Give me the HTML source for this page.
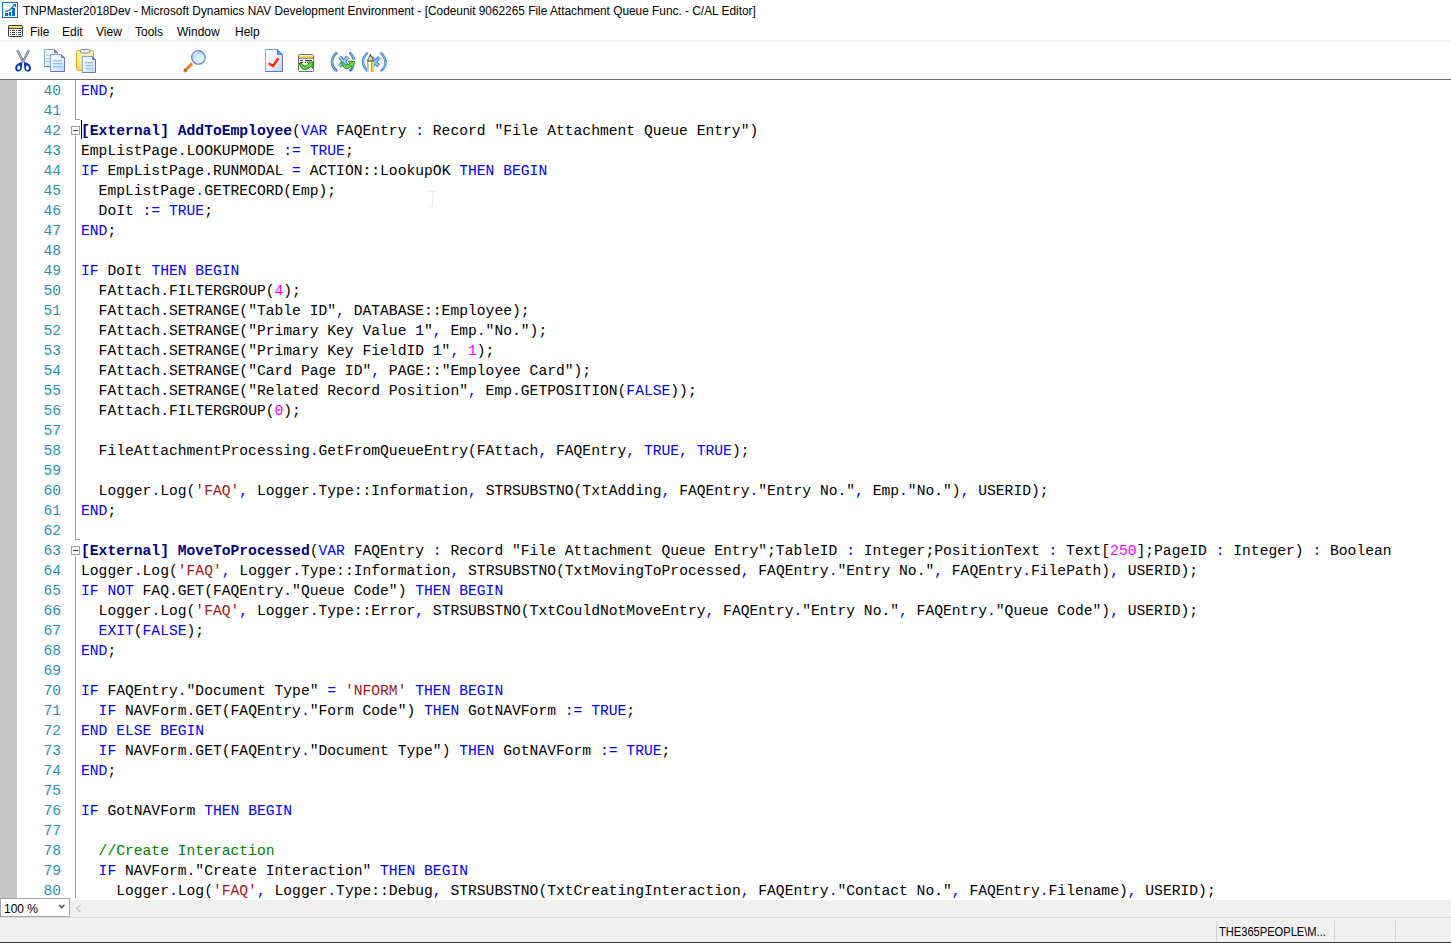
<!DOCTYPE html>
<html><head><meta charset="utf-8">
<style>
*{margin:0;padding:0;box-sizing:border-box}
html,body{width:1451px;height:943px;overflow:hidden;background:#fff}
body{position:relative;font-family:"Liberation Sans",sans-serif;color:#000}
.abs{position:absolute}
#title{position:absolute;left:23px;top:3px;font-size:12px;transform:scaleX(0.988);transform-origin:0 0;line-height:16px;white-space:nowrap;color:#000}
#menu{position:absolute;top:24px;left:0;height:18px;font-size:12px;line-height:16px}
#menu span{position:absolute;top:0;white-space:nowrap}
#sep1{position:absolute;left:0;top:40px;width:1451px;height:2px;background:#f0f0f0}
#sep2{position:absolute;left:0;top:79px;width:1451px;height:1px;background:#6b6b6b}
#editor{position:absolute;left:0;top:80px;width:1451px;height:818px;overflow:hidden;background:#fff}
#gutter{position:absolute;left:0;top:0;width:17px;height:818px;background:#c6c6c6}
.ln{position:absolute;left:0;width:61px;text-align:right;height:20px;line-height:22px;font-family:"Liberation Mono",monospace;font-size:14.66px;color:#2b91af;white-space:pre}
.cl{position:absolute;left:81px;height:20px;line-height:22px;font-family:"Liberation Mono",monospace;font-size:14.66px;color:#000;white-space:pre}
.cl i{font-style:normal}
.k{color:#0000ff}
.s{color:#a31515}
.n{color:#ff00ff}
.c{color:#008000}
.b{color:#000080;font-weight:bold}
.vl{position:absolute;width:1px;background:#a0a0a0}
.fb{position:absolute;width:9px;height:9px;border:1px solid #a0a0a0;background:#fff}
.fb:after{content:"";position:absolute;left:1px;top:3px;width:5px;height:1px;background:#404040}
#bottom{position:absolute;left:0;top:898px;width:1451px;height:45px;background:#f0f0f0}
#zoom{position:absolute;left:0;top:898px;width:70px;height:19px;border:1px solid #a4a6ac;background:#fff;font-size:12px;line-height:16px}
#status{position:absolute;left:0;top:917px;width:1451px;height:1px;background:#dadada}
#bline{position:absolute;left:0;top:941px;width:1451px;height:2px;background:#333}
.sdiv{position:absolute;top:921px;width:1px;height:20px;background:#d4d4d4}
#stxt{position:absolute;left:1219px;top:924px;font-size:12px;line-height:16px;white-space:nowrap;transform:scaleX(0.926);transform-origin:0 0}
</style></head><body>
<div id="title">TNPMaster2018Dev - Microsoft Dynamics NAV Development Environment - [Codeunit 9062265 File Attachment Queue Func. - C/AL Editor]</div>
<div id="menu"><span style="left:30px">File</span><span style="left:62px">Edit</span><span style="left:96px">View</span><span style="left:135px">Tools</span><span style="left:177px">Window</span><span style="left:235px">Help</span></div>
<div id="sep1"></div>
<svg class="abs" style="left:0;top:0" width="400" height="80" viewBox="0 0 400 80">
<defs>
<linearGradient id="docg" x1="0" y1="0" x2="1" y2="1"><stop offset="0" stop-color="#ffffff"/><stop offset="0.45" stop-color="#eef4fc"/><stop offset="1" stop-color="#b5d5f8"/></linearGradient>
<linearGradient id="clipg" x1="0" y1="0" x2="0" y2="1"><stop offset="0" stop-color="#fff8c0"/><stop offset="1" stop-color="#ffd65a"/></linearGradient>
<radialGradient id="lensg" cx="0.6" cy="0.65" r="0.6"><stop offset="0" stop-color="#f4ffff"/><stop offset="0.6" stop-color="#c6ecfb"/><stop offset="1" stop-color="#9cc8f2"/></radialGradient>
<linearGradient id="yband" x1="0" y1="0" x2="0" y2="1"><stop offset="0" stop-color="#fffad0"/><stop offset="1" stop-color="#f5b21c"/></linearGradient>
</defs>
<!-- title icon -->
<rect x="2.5" y="2.5" width="15" height="15" fill="#fff" stroke="#0a6fc8" stroke-width="1"/>
<rect x="5" y="13" width="3" height="3" fill="#0a6fc8"/>
<rect x="9" y="12" width="2" height="4" fill="#0a6fc8"/>
<rect x="12" y="8" width="3" height="8" fill="#0a6fc8"/>
<path d="M5.2 11.4 L9.6 10.2 L14.2 5.2" fill="none" stroke="#0a6fc8" stroke-width="1.3"/>
<path d="M12.8 4 L16 4 L16 7.2 Z" fill="#0a6fc8"/>
<!-- menu icon -->
<rect x="8.5" y="25.5" width="14" height="11" rx="1" fill="#fff" stroke="#333" stroke-width="1"/>
<rect x="9" y="26" width="13" height="2" fill="url(#yband)"/>
<rect x="8.5" y="28" width="14" height="1" fill="#444"/>
<g fill="#444"><rect x="10" y="30" width="1" height="1"/><rect x="12" y="30" width="3" height="1"/><rect x="16" y="30" width="1" height="1"/><rect x="18" y="30" width="3" height="1"/>
<rect x="10" y="32" width="1" height="1"/><rect x="12" y="32" width="3" height="1"/><rect x="16" y="32" width="1" height="1"/><rect x="18" y="32" width="3" height="1"/>
<rect x="10" y="34" width="1" height="1"/><rect x="12" y="34" width="3" height="1"/><rect x="16" y="34" width="1" height="1"/><rect x="18" y="34" width="3" height="1"/></g>
<!-- scissors -->
<path d="M17.3 50 L23.3 62" stroke="#556080" stroke-width="2.2" fill="none"/>
<path d="M17.3 50 L23.3 62" stroke="#d8dde8" stroke-width="0.8" fill="none"/>
<path d="M28.9 50 L22.9 62" stroke="#556080" stroke-width="2.2" fill="none"/>
<path d="M28.9 50 L22.9 62" stroke="#d8dde8" stroke-width="0.8" fill="none"/>
<path fill-rule="evenodd" fill="#0a3db8" d="M22.4 62.3 C18.5 62.3 15.2 64.8 15.2 68.2 C15.2 70.4 16.7 71.6 18.3 71.6 C20.6 71.6 22 69.5 22 66.8 Z M18.9 65.6 C20.1 65.6 20.4 66.8 20.3 67.9 C20.2 69 19.5 69.9 18.6 69.9 C17.6 69.9 17.1 69.1 17.3 68 C17.5 66.7 18.1 65.6 18.9 65.6 Z"/>
<path fill-rule="evenodd" fill="#0a3db8" d="M23.8 62.3 C27.7 62.3 31 64.8 31 68.2 C31 70.4 29.5 71.6 27.9 71.6 C25.6 71.6 24.2 69.5 24.2 66.8 Z M27.3 65.6 C26.1 65.6 25.8 66.8 25.9 67.9 C26 69 26.7 69.9 27.6 69.9 C28.6 69.9 29.1 69.1 28.9 68 C28.7 66.7 28.1 65.6 27.3 65.6 Z"/>
<!-- copy -->
<path d="M44.5 49.5 H54.5 L57.5 52.5 V66.5 H44.5 Z" fill="url(#docg)" stroke="#6f74b4" stroke-width="1"/>
<path d="M44.5 66.5 V49.5 H54.5" fill="none" stroke="#7fa6dc" stroke-width="1"/>
<path d="M54.5 49.5 V52.5 H57.5" fill="#5aa8e8" stroke="#6f74b4" stroke-width="1"/>
<g fill="#9ccbf7"><rect x="46" y="55" width="5" height="1"/><rect x="46" y="58" width="5" height="1"/><rect x="46" y="61" width="5" height="1"/></g>
<path d="M50.5 54.5 H61.5 L64.5 57.5 V71.5 H50.5 Z" fill="url(#docg)" stroke="#6f74b4" stroke-width="1"/>
<path d="M50.5 71.5 V54.5 H61.5" fill="none" stroke="#7fa6dc" stroke-width="1"/>
<path d="M61.5 54.5 V57.5 H64.5" fill="#5aa8e8" stroke="#6f74b4" stroke-width="1"/>
<g fill="#8ec2f6"><rect x="53" y="60" width="9" height="1.3"/><rect x="53" y="63" width="9" height="1.3"/><rect x="53" y="66" width="9" height="1.3"/></g>
<!-- paste -->
<rect x="76.5" y="50.5" width="17" height="20" rx="2" fill="url(#clipg)" stroke="#dca21a" stroke-width="1"/>
<rect x="80.5" y="49.5" width="9" height="3.5" rx="1" fill="#e8ecf0" stroke="#8890a0" stroke-width="1"/>
<path d="M82.5 56.5 H92.5 L95.5 59.5 V72.5 H82.5 Z" fill="url(#docg)" stroke="#6f74b4" stroke-width="1"/>
<path d="M82.5 72.5 V56.5 H92.5" fill="none" stroke="#7fa6dc" stroke-width="1"/>
<path d="M92.5 56.5 V59.5 H95.5" fill="#5aa8e8" stroke="#6f74b4" stroke-width="1"/>
<g fill="#8ec2f6"><rect x="85" y="62" width="8" height="1.3"/><rect x="85" y="65" width="8" height="1.3"/><rect x="85" y="68" width="8" height="1.3"/></g>
<!-- magnifier -->
<path d="M185 70.6 L191.2 64.4" stroke="#e48a2a" stroke-width="3.4" stroke-linecap="round" fill="none"/>
<path d="M185 70.6 L185.6 70" stroke="#555" stroke-width="3.4" fill="none"/>
<circle cx="198.4" cy="57.4" r="6.8" fill="url(#lensg)" stroke="#7b82c4" stroke-width="1.2"/>
<path d="M194 55.5 Q195 52.5 198 52" stroke="#ffffff" stroke-width="1.2" fill="none"/>
<!-- doc check -->
<path d="M265.5 49.5 H277.5 L282.5 54.5 V71.5 H265.5 Z" fill="url(#docg)" stroke="#6f74b4" stroke-width="1"/>
<path d="M265.5 71.5 V49.5 H277.5" fill="none" stroke="#7fa6dc" stroke-width="1"/>
<path d="M277.5 49.5 V54.5 H282.5" fill="#4aa0e8" stroke="#6f74b4" stroke-width="1"/>
<path d="M268.6 63.2 L273 66 L278.4 58.2" stroke="#ff2a10" stroke-width="2.5" fill="none"/>
<!-- green form icon -->
<rect x="298.5" y="54.5" width="15" height="17" rx="1" fill="#fff" stroke="#707070" stroke-width="1"/>
<rect x="299" y="55" width="14" height="3" fill="url(#yband)"/>
<rect x="299" y="58" width="14" height="1" fill="#9098a8"/>
<g fill="#333"><rect x="300" y="60" width="3" height="1"/><rect x="305" y="60" width="7" height="1"/><rect x="300" y="62" width="3" height="1"/><rect x="305" y="62" width="1" height="1"/><rect x="300" y="64" width="2" height="1"/></g>
<path d="M299.3 63 Q301 69.5 305 69.5 Q308.5 69.5 310.5 66.5 L312.5 68.5 L313 62 L307 62 L309 64 Q307 66 305 66 Q302.5 66 301 63 Z" fill="#5fd040" stroke="#1b8a10" stroke-width="0.9"/>
<!-- (x) with arrow -->
<path d="M337.2 52.6 C333.6 55.6 332 58.8 332 62 C332 65.3 333.6 68.5 337.2 71.3" stroke="#3070c0" stroke-width="2.6" fill="none"/>
<path d="M337.2 52.6 C333.6 55.6 332 58.8 332 62 C332 65.3 333.6 68.5 337.2 71.3" stroke="#b8daf5" stroke-width="0.9" fill="none"/>
<path d="M349.6 52.6 C351.8 54.5 353.3 56.8 354.2 59.6" stroke="#3070c0" stroke-width="2.6" fill="none"/>
<path d="M349.6 52.6 C351.8 54.5 353.3 56.8 354.2 59.6" stroke="#b8daf5" stroke-width="0.9" fill="none"/>
<path d="M352.4 67.6 C351.7 68.9 350.8 70.2 349.8 71.2" stroke="#2d6ec0" stroke-width="2.4" fill="none"/>
<path d="M339.6 56.8 L347.8 66.2" stroke="#3070c0" stroke-width="3.6" fill="none"/>
<path d="M347.8 56.8 L339.6 66.2" stroke="#3070c0" stroke-width="3.6" fill="none"/>
<path d="M339.6 56.8 L347.8 66.2" stroke="#a9d2f2" stroke-width="2" fill="none"/>
<path d="M347.8 56.8 L339.6 66.2" stroke="#a9d2f2" stroke-width="2" fill="none"/>
<path d="M341.3 62.3 Q343.5 68.8 346.5 68.6 Q349.5 68.4 351 66.2 L353.5 67.5 L354.5 61.3 L348.5 61.3 L350 63.6 Q348.5 65 346.5 64.9 Q344.5 64.6 342.5 62 Z" fill="#66d444" stroke="#168a10" stroke-width="0.9"/>
<!-- (x) with pencil -->
<path d="M367.8 52.6 Q362.4 57.5 363 62.2 Q363.6 67.5 367.8 71" stroke="#3a82c8" stroke-width="2.4" fill="none"/>
<path d="M367.8 52.6 Q362.4 57.5 363 62.2 Q363.6 67.5 367.8 71" stroke="#b8daf5" stroke-width="0.7" fill="none"/>
<path d="M380.5 52.6 Q385.6 57.5 385.6 62.2 Q385.4 67.5 380.5 71" stroke="#3a82c8" stroke-width="2.4" fill="none"/>
<path d="M380.5 52.6 Q385.6 57.5 385.6 62.2 Q385.4 67.5 380.5 71" stroke="#b8daf5" stroke-width="0.7" fill="none"/>
<path d="M371.5 57.2 L378.6 66" stroke="#2f70c0" stroke-width="3.6" fill="none"/>
<path d="M379.3 57.2 L372.3 66" stroke="#2f70c0" stroke-width="3.6" fill="none"/>
<path d="M371.5 57.2 L378.6 66" stroke="#8cc2ee" stroke-width="2" fill="none"/>
<path d="M379.3 57.2 L372.3 66" stroke="#8cc2ee" stroke-width="2" fill="none"/>
<path d="M367.2 61 L370.4 54.2 L373.6 61 Z" fill="#f8c8a0" stroke="#555" stroke-width="0.8"/>
<path d="M369.4 56.4 L370.4 54.2 L371.4 56.4 Z" fill="#444"/>
<rect x="367" y="61" width="6.8" height="11" fill="#fffbd0"/>
<rect x="367.2" y="61" width="1.4" height="11" fill="#b8b8a0"/>
<rect x="371.2" y="61" width="0.9" height="11" fill="#999"/>
<rect x="372.2" y="61" width="1.6" height="11" fill="#f0c020"/>
<rect x="367" y="60.6" width="6.8" height="1" fill="#555"/>
</svg>
<!-- toolbar icons end -->

<div id="sep2"></div>
<div id="editor">
<div id="gutter"></div>
<div class="ln" style="top:0px">40</div>
<div class="cl" style="top:0px"><i class="k">END</i>;</div>
<div class="ln" style="top:20px">41</div>
<div class="ln" style="top:40px">42</div>
<div class="cl" style="top:40px"><i class="b">[External] AddToEmployee</i>(<i class="k">VAR</i> FAQEntry <i class="k">:</i> Record "File Attachment Queue Entry")</div>
<div class="ln" style="top:60px">43</div>
<div class="cl" style="top:60px">EmpListPage<i class="k">.</i>LOOKUPMODE <i class="k">:=</i> <i class="k">TRUE</i>;</div>
<div class="ln" style="top:80px">44</div>
<div class="cl" style="top:80px"><i class="k">IF</i> EmpListPage<i class="k">.</i>RUNMODAL <i class="k">=</i> ACTION::LookupOK <i class="k">THEN</i> <i class="k">BEGIN</i></div>
<div class="ln" style="top:100px">45</div>
<div class="cl" style="top:100px">  EmpListPage<i class="k">.</i>GETRECORD(Emp);</div>
<div class="ln" style="top:120px">46</div>
<div class="cl" style="top:120px">  DoIt <i class="k">:=</i> <i class="k">TRUE</i>;</div>
<div class="ln" style="top:140px">47</div>
<div class="cl" style="top:140px"><i class="k">END</i>;</div>
<div class="ln" style="top:160px">48</div>
<div class="ln" style="top:180px">49</div>
<div class="cl" style="top:180px"><i class="k">IF</i> DoIt <i class="k">THEN</i> <i class="k">BEGIN</i></div>
<div class="ln" style="top:200px">50</div>
<div class="cl" style="top:200px">  FAttach<i class="k">.</i>FILTERGROUP(<i class="n">4</i>);</div>
<div class="ln" style="top:220px">51</div>
<div class="cl" style="top:220px">  FAttach<i class="k">.</i>SETRANGE("Table ID"<i class="k">,</i> DATABASE::Employee);</div>
<div class="ln" style="top:240px">52</div>
<div class="cl" style="top:240px">  FAttach<i class="k">.</i>SETRANGE("Primary Key Value 1"<i class="k">,</i> Emp<i class="k">.</i>"No.");</div>
<div class="ln" style="top:260px">53</div>
<div class="cl" style="top:260px">  FAttach<i class="k">.</i>SETRANGE("Primary Key FieldID 1"<i class="k">,</i> <i class="n">1</i>);</div>
<div class="ln" style="top:280px">54</div>
<div class="cl" style="top:280px">  FAttach<i class="k">.</i>SETRANGE("Card Page ID"<i class="k">,</i> PAGE::"Employee Card");</div>
<div class="ln" style="top:300px">55</div>
<div class="cl" style="top:300px">  FAttach<i class="k">.</i>SETRANGE("Related Record Position"<i class="k">,</i> Emp<i class="k">.</i>GETPOSITION(<i class="k">FALSE</i>));</div>
<div class="ln" style="top:320px">56</div>
<div class="cl" style="top:320px">  FAttach<i class="k">.</i>FILTERGROUP(<i class="n">0</i>);</div>
<div class="ln" style="top:340px">57</div>
<div class="ln" style="top:360px">58</div>
<div class="cl" style="top:360px">  FileAttachmentProcessing<i class="k">.</i>GetFromQueueEntry(FAttach<i class="k">,</i> FAQEntry<i class="k">,</i> <i class="k">TRUE,</i> <i class="k">TRUE</i>);</div>
<div class="ln" style="top:380px">59</div>
<div class="ln" style="top:400px">60</div>
<div class="cl" style="top:400px">  Logger<i class="k">.</i>Log(<i class="s">'FAQ'</i><i class="k">,</i> Logger<i class="k">.</i>Type::Information<i class="k">,</i> STRSUBSTNO(TxtAdding<i class="k">,</i> FAQEntry<i class="k">.</i>"Entry No."<i class="k">,</i> Emp<i class="k">.</i>"No.")<i class="k">,</i> USERID);</div>
<div class="ln" style="top:420px">61</div>
<div class="cl" style="top:420px"><i class="k">END</i>;</div>
<div class="ln" style="top:440px">62</div>
<div class="ln" style="top:460px">63</div>
<div class="cl" style="top:460px"><i class="b">[External] MoveToProcessed</i>(<i class="k">VAR</i> FAQEntry <i class="k">:</i> Record "File Attachment Queue Entry";TableID <i class="k">:</i> Integer;PositionText <i class="k">:</i> Text[<i class="n">250</i>];PageID <i class="k">:</i> Integer) <i class="k">:</i> Boolean</div>
<div class="ln" style="top:480px">64</div>
<div class="cl" style="top:480px">Logger<i class="k">.</i>Log(<i class="s">'FAQ'</i><i class="k">,</i> Logger<i class="k">.</i>Type::Information<i class="k">,</i> STRSUBSTNO(TxtMovingToProcessed<i class="k">,</i> FAQEntry<i class="k">.</i>"Entry No."<i class="k">,</i> FAQEntry<i class="k">.</i>FilePath)<i class="k">,</i> USERID);</div>
<div class="ln" style="top:500px">65</div>
<div class="cl" style="top:500px"><i class="k">IF</i> <i class="k">NOT</i> FAQ<i class="k">.</i>GET(FAQEntry<i class="k">.</i>"Queue Code") <i class="k">THEN</i> <i class="k">BEGIN</i></div>
<div class="ln" style="top:520px">66</div>
<div class="cl" style="top:520px">  Logger<i class="k">.</i>Log(<i class="s">'FAQ'</i><i class="k">,</i> Logger<i class="k">.</i>Type::Error<i class="k">,</i> STRSUBSTNO(TxtCouldNotMoveEntry<i class="k">,</i> FAQEntry<i class="k">.</i>"Entry No."<i class="k">,</i> FAQEntry<i class="k">.</i>"Queue Code")<i class="k">,</i> USERID);</div>
<div class="ln" style="top:540px">67</div>
<div class="cl" style="top:540px">  <i class="k">EXIT</i>(<i class="k">FALSE</i>);</div>
<div class="ln" style="top:560px">68</div>
<div class="cl" style="top:560px"><i class="k">END</i>;</div>
<div class="ln" style="top:580px">69</div>
<div class="ln" style="top:600px">70</div>
<div class="cl" style="top:600px"><i class="k">IF</i> FAQEntry<i class="k">.</i>"Document Type" <i class="k">=</i> <i class="s">'NFORM'</i> <i class="k">THEN</i> <i class="k">BEGIN</i></div>
<div class="ln" style="top:620px">71</div>
<div class="cl" style="top:620px">  <i class="k">IF</i> NAVForm<i class="k">.</i>GET(FAQEntry<i class="k">.</i>"Form Code") <i class="k">THEN</i> GotNAVForm <i class="k">:=</i> <i class="k">TRUE</i>;</div>
<div class="ln" style="top:640px">72</div>
<div class="cl" style="top:640px"><i class="k">END</i> <i class="k">ELSE</i> <i class="k">BEGIN</i></div>
<div class="ln" style="top:660px">73</div>
<div class="cl" style="top:660px">  <i class="k">IF</i> NAVForm<i class="k">.</i>GET(FAQEntry<i class="k">.</i>"Document Type") <i class="k">THEN</i> GotNAVForm <i class="k">:=</i> <i class="k">TRUE</i>;</div>
<div class="ln" style="top:680px">74</div>
<div class="cl" style="top:680px"><i class="k">END</i>;</div>
<div class="ln" style="top:700px">75</div>
<div class="ln" style="top:720px">76</div>
<div class="cl" style="top:720px"><i class="k">IF</i> GotNAVForm <i class="k">THEN</i> <i class="k">BEGIN</i></div>
<div class="ln" style="top:740px">77</div>
<div class="ln" style="top:760px">78</div>
<div class="cl" style="top:760px">  <i class="c">//Create Interaction</i></div>
<div class="ln" style="top:780px">79</div>
<div class="cl" style="top:780px">  <i class="k">IF</i> NAVForm<i class="k">.</i>"Create Interaction" <i class="k">THEN</i> <i class="k">BEGIN</i></div>
<div class="ln" style="top:800px">80</div>
<div class="cl" style="top:800px">    Logger<i class="k">.</i>Log(<i class="s">'FAQ'</i><i class="k">,</i> Logger<i class="k">.</i>Type::Debug<i class="k">,</i> STRSUBSTNO(TxtCreatingInteraction<i class="k">,</i> FAQEntry<i class="k">.</i>"Contact No."<i class="k">,</i> FAQEntry<i class="k">.</i>Filename)<i class="k">,</i> USERID);</div>
<div class="vl" style="left:75px;top:0;height:40px"></div>
<div class="vl" style="left:75px;top:39px;width:5px;height:1px"></div>
<div class="fb" style="left:71px;top:46px"></div>
<div class="vl" style="left:75px;top:56px;height:404px"></div>
<div class="vl" style="left:75px;top:459px;width:5px;height:1px"></div>
<div class="fb" style="left:71px;top:466px"></div>
<div class="vl" style="left:75px;top:476px;height:342px"></div>
<div class="abs" style="left:81px;top:40px;width:1px;height:19px;background:#000"></div>
<div class="abs" style="left:432px;top:111px;width:1px;height:16px;background:#efefef"></div>
<div class="abs" style="left:429px;top:111px;width:3px;height:1px;background:#efefef"></div>
<div class="abs" style="left:433px;top:111px;width:3px;height:1px;background:#efefef"></div>
<div class="abs" style="left:429px;top:126px;width:3px;height:1px;background:#efefef"></div>
<div class="abs" style="left:433px;top:126px;width:3px;height:1px;background:#efefef"></div>
</div>
<div class="abs" style="left:0;top:900px;width:1451px;height:17px;background:#f0f0f0"></div>
<div class="abs" style="left:0;top:917px;width:1451px;height:1px;background:#dadada"></div>
<div class="abs" style="left:0;top:918px;width:1451px;height:24px;background:#f0f0f0"></div>
<div class="abs" style="left:0;top:942px;width:1451px;height:1px;background:#3a3a3a"></div>
<div id="zoom"><span style="position:absolute;left:3px;top:2px">100 %</span>
<svg class="abs" style="left:57px;top:5px" width="8" height="6" viewBox="0 0 8 6"><path d="M1.2 0.8 L3.8 3.6 L6.4 0.8" fill="none" stroke="#505050" stroke-width="1.4"/></svg></div>
<svg class="abs" style="left:74px;top:903px" width="10" height="11" viewBox="0 0 10 11"><path d="M6.5 2.2 L2.6 5.6 L6.5 9" fill="none" stroke="#c6c6c6" stroke-width="1.2"/></svg>
<div class="sdiv" style="left:1216px"></div>
<div class="sdiv" style="left:1334px"></div>
<div class="sdiv" style="left:1395px"></div>
<div id="stxt">THE365PEOPLE\M...</div>
</body></html>
